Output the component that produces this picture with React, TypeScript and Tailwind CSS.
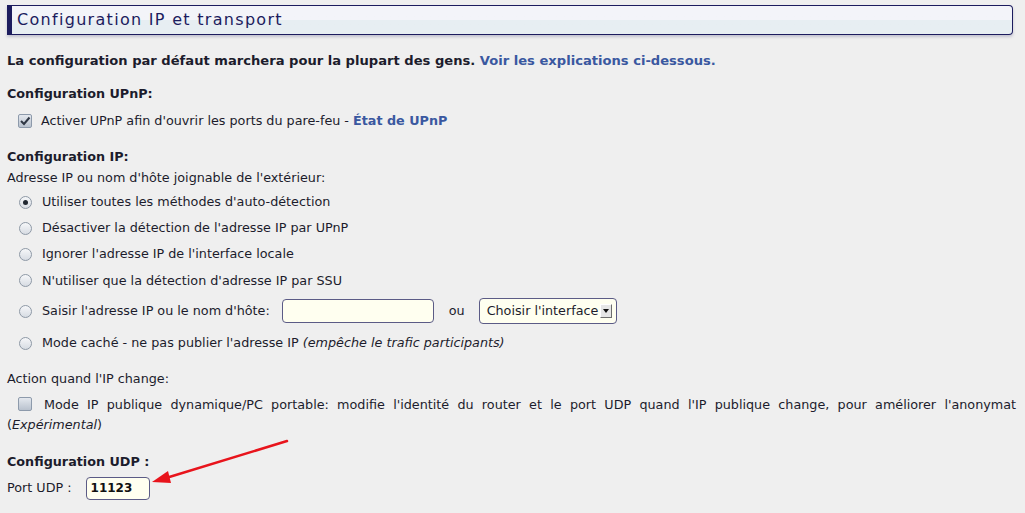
import React from 'react'

const font = { fontFamily: '"DejaVu Sans", Verdana, sans-serif' }

function Checkbox({ checked }: { checked?: boolean }) {
  return (
    <span className="inline-flex w-[14px] h-[14px] shrink-0 items-center justify-center rounded-[2px] border border-[#8d9aab] bg-gradient-to-b from-[#e4e8ee] to-[#b9c2ce]">
      {checked && (
        <svg width="12" height="12" viewBox="0 0 12 12">
          <path d="M2 6 L5 9 L10.5 2.5" fill="none" stroke="#2f3744" strokeWidth="2" />
        </svg>
      )}
    </span>
  )
}

function Radio({ checked }: { checked?: boolean }) {
  return (
    <span className="inline-flex w-[13px] h-[13px] shrink-0 items-center justify-center rounded-full border border-[#8e99a6] bg-gradient-to-b from-[#f6f7f9] to-[#d7dce3]">
      {checked && <span className="w-[5px] h-[5px] rounded-full bg-[#1f2630]" />}
    </span>
  )
}

function RadioRow({ checked, children, h = 'h-[26px]' }: { checked?: boolean; children: React.ReactNode; h?: string }) {
  return (
    <div className={`flex items-center pl-[12px] ${h}`}>
      <Radio checked={checked} />
      <span className="ml-[10px]">{children}</span>
    </div>
  )
}

export default function App() {
  return (
    <div style={font} className="relative min-h-[513px] w-[1025px] bg-[#efefef] text-[12.75px] text-[#1c1c2c] pt-[5px] pl-[7px] pr-[9px]">
      {/* Title */}
      <div className="h-[30px] w-[1006px] flex items-center border border-[#1c1c5e] border-l-[5px] rounded-r-[4px] bg-gradient-to-b from-[#f3f4f9] from-50% to-[#e7eef2] to-50% shadow-[0_2px_3px_rgba(60,60,110,0.25)]">
        <span className="pl-[5px] text-[16px] tracking-[1.3px] text-[#1c1c5e]">Configuration IP et transport</span>
      </div>

      <div className="mt-[18px] font-bold text-[13.1px] leading-[16px]">
        La configuration par défaut marchera pour la plupart des gens.{' '}
        <span className="text-[#3a58a0]">Voir les explications ci-dessous.</span>
      </div>

      <div className="mt-[17px] font-bold leading-[16px]">Configuration UPnP:</div>
      <div className="flex items-center pl-[11px] h-[26px] mt-[6px]">
        <Checkbox checked />
        <span className="ml-[9px]">
          Activer UPnP afin d'ouvrir les ports du pare-feu -{' '}
          <span className="font-bold text-[#3a58a0]">État de UPnP</span>
        </span>
      </div>

      <div className="mt-[15px] font-bold leading-[16px]">Configuration IP:</div>
      <div className="mt-[5px] leading-[16px]">Adresse IP ou nom d'hôte joignable de l'extérieur:</div>
      <div className="mt-[3px]">
        <RadioRow checked>Utiliser toutes les méthodes d'auto-détection</RadioRow>
        <RadioRow>Désactiver la détection de l'adresse IP par UPnP</RadioRow>
        <RadioRow>Ignorer l'adresse IP de l'interface locale</RadioRow>
        <RadioRow h="h-[27px]">N'utiliser que la détection d'adresse IP par SSU</RadioRow>
        <div className="flex items-center pl-[12px] h-[34px]">
          <Radio />
          <span className="ml-[10px]">Saisir l'adresse IP ou le nom d'hôte:</span>
          <input className="ml-[12px] w-[152px] h-[24px] rounded-[4px] border border-[#5b5b86] bg-[#fffff0] outline-none" />
          <span className="ml-[15px]">ou</span>
          <div className="ml-[14px] flex items-center h-[26px] w-[138px] rounded-[4px] border border-[#5b5b86] bg-[#fffff0] pl-[7px] pr-[4px]">
            <span className="flex-1 whitespace-nowrap">Choisir l'interface</span>
            <span className="flex w-[12px] h-[14px] items-center justify-center bg-[#e6e6e6] border border-t-white border-l-white border-r-[#6e6e6e] border-b-[#6e6e6e]">
              <svg width="6" height="4" viewBox="0 0 6 4">
                <path d="M0 0 H6 L3 4 Z" fill="#111" />
              </svg>
            </span>
          </div>
        </div>
        <RadioRow h="h-[30px]">
          Mode caché - ne pas publier l'adresse IP <i>(empêche le trafic participants)</i>
        </RadioRow>
      </div>

      <div className="mt-[13px] leading-[16px]">Action quand l'IP change:</div>
      <div className="mt-[8px] text-justify leading-[20px] [text-align-last:left]">
        <span className="inline-block w-[14px] h-[14px] overflow-hidden align-[-2px] ml-[11px] mr-[12px]">
          <Checkbox />
        </span>
        Mode IP publique dynamique/PC portable: modifie l'identité du router et le port UDP quand l'IP publique change, pour
        améliorer l'anonymat <span className="whitespace-nowrap">(<i>Expérimental</i>)</span>
      </div>

      <div className="mt-[19px] font-bold leading-[16px]">Configuration UDP :</div>
      <div className="flex items-center mt-[6px] h-[24px]">
        <span>Port UDP :</span>
        <input
          defaultValue="11123"
          className="ml-[14px] w-[64px] h-[23px] rounded-[4px] border border-[#5b5b86] bg-[#fffff0] px-[4px] font-bold text-[12px] text-[#111] outline-none"
          style={font}
        />
      </div>

      {/* annotation arrow */}
      <svg className="absolute left-0 top-0 pointer-events-none" width="1025" height="513">
        <line x1="287" y1="441" x2="166" y2="478" stroke="#e8141c" strokeWidth="2.5" strokeLinecap="round" />
        <path d="M152 482 L168 471 L171 483 Z" fill="#e8141c" />
      </svg>
    </div>
  )
}
